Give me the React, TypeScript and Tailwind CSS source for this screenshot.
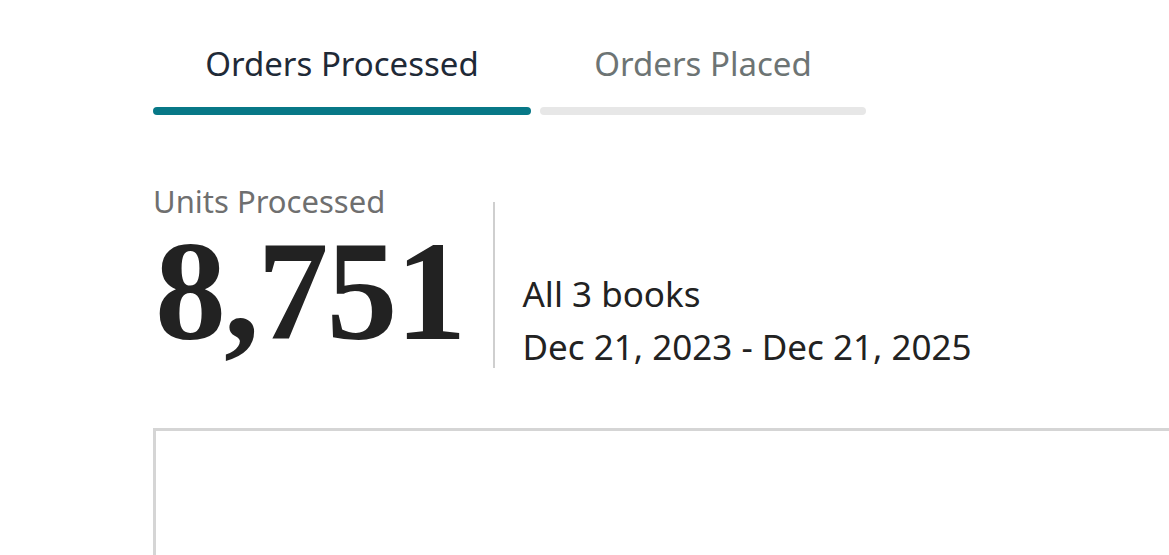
export default function App() {
  return (
    <div className="min-h-screen bg-white" style={{ fontFamily: '"Noto Sans", "Open Sans", sans-serif' }}>
      <div className="pl-[153px] pt-[40px]">
        <div className="flex gap-[9px]">
          <div className="flex w-[378px] flex-col items-center">
            <div className="text-[33px] leading-[48px] text-[#1f2a37]">Orders Processed</div>
            <div className="mt-[19px] h-[8px] w-full rounded-full bg-[#077887]" />
          </div>
          <div className="flex w-[326px] flex-col items-center">
            <div className="text-[33px] leading-[48px] text-[#6d7474]">Orders Placed</div>
            <div className="mt-[19px] h-[8px] w-full rounded-full bg-[#e7e7e7]" />
          </div>
        </div>

        <div className="mt-[68px] flex">
          <div>
            <div className="text-[31px] leading-[36px] text-[#6f6f6f]">Units Processed</div>
            <div
              className="mt-[17px] text-[142px] leading-[110px] font-bold text-[#222] tracking-[-2px] pl-[2px]"
              style={{ fontFamily: '"Liberation Serif", "DejaVu Serif", serif' }}
            >
              8,751
            </div>
          </div>
          <div className="ml-[28px] mt-[19px] h-[166px] w-[2px] bg-[#cfcfcf]" />
          <div className="ml-[28px] mt-[84px] text-[35px] leading-[53px] text-[#222]">
            <div>All 3 books</div>
            <div>Dec 21, 2023 - Dec 21, 2025</div>
          </div>
        </div>

        <div className="mt-[55px] h-[200px] border-l-[3px] border-t-[3px] border-[#d5d5d5]" />
      </div>
    </div>
  )
}
